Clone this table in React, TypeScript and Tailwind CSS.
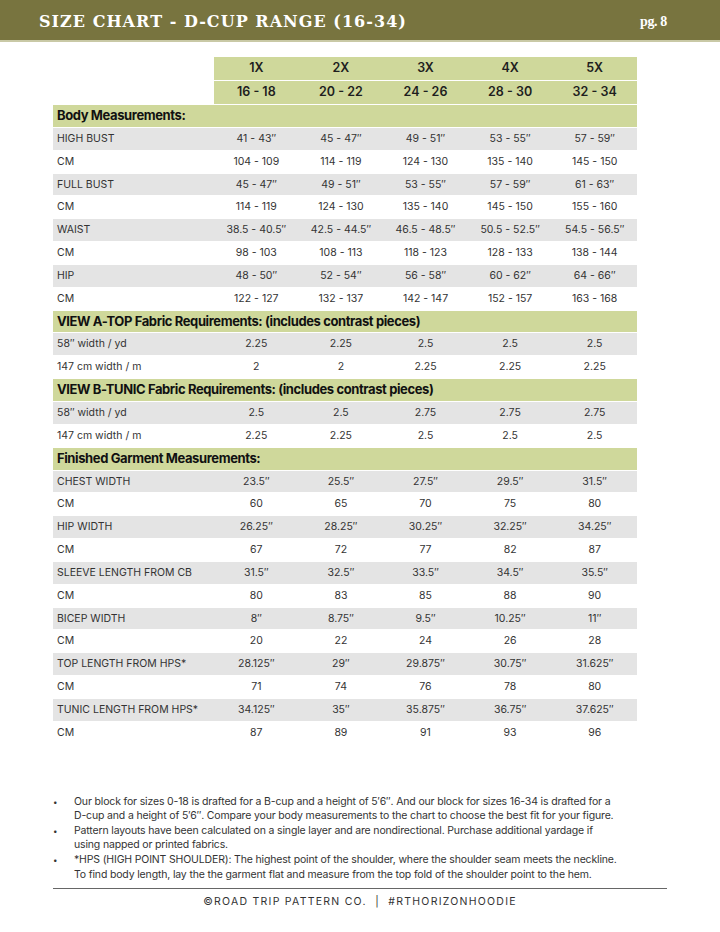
const sizes = ['1X', '2X', '3X', '4X', '5X'];
const ranges = ['16 - 18', '20 - 22', '24 - 26', '28 - 30', '32 - 34'];

type Row = { label: string; values?: string[]; section?: boolean; shade?: boolean };

const rows: Row[] = [
  { label: 'Body Measurements:', section: true },
  { label: 'HIGH BUST', values: ['41 - 43″', '45 - 47″', '49 - 51″', '53 - 55″', '57 - 59″'], shade: true },
  { label: 'CM', values: ['104 - 109', '114 - 119', '124 - 130', '135 - 140', '145 - 150'] },
  { label: 'FULL BUST', values: ['45 - 47″', '49 - 51″', '53 - 55″', '57 - 59″', '61 - 63″'], shade: true },
  { label: 'CM', values: ['114 - 119', '124 - 130', '135 - 140', '145 - 150', '155 - 160'] },
  { label: 'WAIST', values: ['38.5 - 40.5″', '42.5 - 44.5″', '46.5 - 48.5″', '50.5 - 52.5″', '54.5 - 56.5″'], shade: true },
  { label: 'CM', values: ['98 - 103', '108 - 113', '118 - 123', '128 - 133', '138 - 144'] },
  { label: 'HIP', values: ['48 - 50″', '52 - 54″', '56 - 58″', '60 - 62″', '64 - 66″'], shade: true },
  { label: 'CM', values: ['122 - 127', '132 - 137', '142 - 147', '152 - 157', '163 - 168'] },
  { label: 'VIEW A-TOP Fabric Requirements: (includes contrast pieces)', section: true },
  { label: '58″ width / yd', values: ['2.25', '2.25', '2.5', '2.5', '2.5'], shade: true },
  { label: '147 cm width / m', values: ['2', '2', '2.25', '2.25', '2.25'] },
  { label: 'VIEW B-TUNIC Fabric Requirements: (includes contrast pieces)', section: true },
  { label: '58″ width / yd', values: ['2.5', '2.5', '2.75', '2.75', '2.75'], shade: true },
  { label: '147 cm width / m', values: ['2.25', '2.25', '2.5', '2.5', '2.5'] },
  { label: 'Finished Garment Measurements:', section: true },
  { label: 'CHEST WIDTH', values: ['23.5″', '25.5″', '27.5″', '29.5″', '31.5″'], shade: true },
  { label: 'CM', values: ['60', '65', '70', '75', '80'] },
  { label: 'HIP WIDTH', values: ['26.25″', '28.25″', '30.25″', '32.25″', '34.25″'], shade: true },
  { label: 'CM', values: ['67', '72', '77', '82', '87'] },
  { label: 'SLEEVE LENGTH FROM CB', values: ['31.5″', '32.5″', '33.5″', '34.5″', '35.5″'], shade: true },
  { label: 'CM', values: ['80', '83', '85', '88', '90'] },
  { label: 'BICEP WIDTH', values: ['8″', '8.75″', '9.5″', '10.25″', '11″'], shade: true },
  { label: 'CM', values: ['20', '22', '24', '26', '28'] },
  { label: 'TOP LENGTH FROM HPS*', values: ['28.125″', '29″', '29.875″', '30.75″', '31.625″'], shade: true },
  { label: 'CM', values: ['71', '74', '76', '78', '80'] },
  { label: 'TUNIC LENGTH FROM HPS*', values: ['34.125″', '35″', '35.875″', '36.75″', '37.625″'], shade: true },
  { label: 'CM', values: ['87', '89', '91', '93', '96'] },
];

const notes: string[][] = [
  [
    'Our block for sizes 0-18 is drafted for a B-cup and a height of 5′6″. And our block for sizes 16-34 is drafted for a',
    'D-cup and a height of 5′6″. Compare your body measurements to the chart to choose the best fit for your figure.',
  ],
  [
    'Pattern layouts have been calculated on a single layer and are nondirectional. Purchase additional yardage if',
    'using napped or printed fabrics.',
  ],
  [
    '*HPS (HIGH POINT SHOULDER): The highest point of the shoulder, where the shoulder seam meets the neckline.',
    'To find body length, lay the the garment flat and measure from the top fold of the shoulder point to the hem.',
  ],
];

const sans = "font-['Inter',sans-serif]";

export default function App() {
  return (
    <div className={`w-[720px] h-[932px] bg-white text-[#1e1e1e] ${sans}`}>
      {/* Title bar */}
      <header className="h-[42px] bg-[#78743f] border-b-2 border-[#c9c9a6] flex items-center justify-between pl-[39px] pr-[53px]">
        <h1 className="font-['DejaVu_Serif',serif] font-bold text-white text-[16px] tracking-[0.065em] pt-[3px]">
          SIZE CHART - D-CUP RANGE (16-34)
        </h1>
        <span className="font-['Liberation_Serif',serif] font-bold text-white text-[14px] tracking-tight pt-[2px]">pg. 8</span>
      </header>

      {/* Table */}
      <div className="mx-[53px] mt-[15px] w-[584px] flex flex-col gap-[1px]">
        <div className="flex h-[23px]">
          <div className="w-[161px]" />
          <div className="flex-1 grid grid-cols-5 bg-[#cfd89b] items-center text-center font-semibold text-[12.5px]">
            {sizes.map((s) => (
              <span key={s}>{s}</span>
            ))}
          </div>
        </div>
        <div className="flex h-[23px]">
          <div className="w-[161px]" />
          <div className="flex-1 grid grid-cols-5 bg-[#cfd89b] items-center text-center font-semibold text-[12.5px]">
            {ranges.map((s) => (
              <span key={s}>{s}</span>
            ))}
          </div>
        </div>

        {rows.map((r, i) =>
          r.section ? (
            <div key={i} className="h-[21.85px] bg-[#cfd89b] flex items-center px-[4px] font-bold text-[13px] tracking-[-0.03em] text-[#111]">
              {r.label}
            </div>
          ) : (
            <div key={i} className={`h-[21.85px] flex items-center text-[10.5px] ${r.shade ? 'bg-[#e4e4e4]' : 'bg-white'}`}>
              <div className="w-[161px] px-[4px] text-[#333]">{r.label}</div>
              <div className="flex-1 grid grid-cols-5 text-center text-[#333]">
                {r.values!.map((v, j) => (
                  <span key={j}>{v}</span>
                ))}
              </div>
            </div>
          )
        )}
      </div>

      {/* Notes */}
      <ul className="mt-[51px] mx-[53px] text-[10.5px] leading-[14.6px] tracking-[-0.015em] text-[#333]">
        {notes.map((lines, i) => (
          <li key={i} className="flex">
            <span className="w-[21px] shrink-0 text-[8px]">•</span>
            <span className="whitespace-nowrap">
              {lines[0]}
              <br />
              {lines[1]}
            </span>
          </li>
        ))}
      </ul>

      {/* Footer */}
      <div className="mx-[53px] mt-[6px] border-t border-[#666] pt-[5px] text-center text-[10.5px] tracking-[0.12em] text-[#333]">
        ©ROAD TRIP PATTERN CO. &nbsp;|&nbsp; #RTHORIZONHOODIE
      </div>
    </div>
  );
}
